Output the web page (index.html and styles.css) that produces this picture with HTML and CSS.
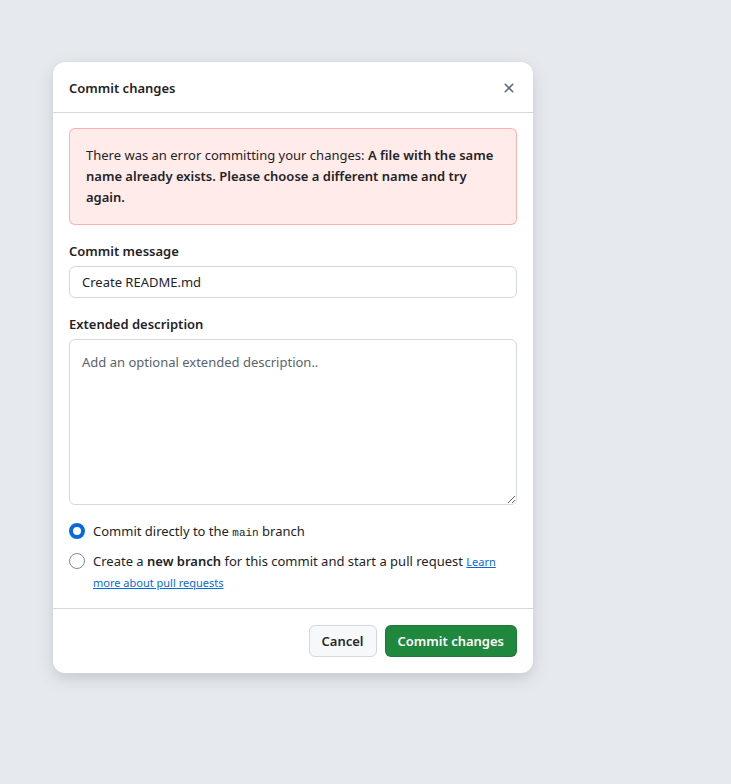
FILE: index.html
```html
<!DOCTYPE html>
<html lang="en">
<head>
<meta charset="utf-8">
<title>Commit changes</title>
<link rel="stylesheet" href="styles.css">
</head>
<body>
<div class="dialog" role="dialog" aria-labelledby="dlg-title">
  <div class="dialog-header">
    <h2 id="dlg-title" class="dialog-title">Commit changes</h2>
    <button class="close-btn" aria-label="Close">
      <svg width="16" height="16" viewBox="0 0 16 16" fill="currentColor"><path d="M3.72 3.72a.75.75 0 0 1 1.06 0L8 6.94l3.22-3.22a.749.749 0 0 1 1.275.326.749.749 0 0 1-.215.734L9.06 8l3.22 3.22a.749.749 0 0 1-.326 1.275.749.749 0 0 1-.734-.215L8 9.06l-3.22 3.22a.751.751 0 0 1-1.042-.018.751.751 0 0 1-.018-1.042L6.940 8 3.72 4.78a.75.75 0 0 1 0-1.060Z"/></svg>
    </button>
  </div>
  <div class="dialog-body">
    <div class="flash-error">There was an error committing your changes: <strong>A file with the same name already exists. Please choose a different name and try again.</strong></div>
    <div class="field">
      <label class="field-label" for="msg">Commit message</label>
      <input id="msg" class="text-input" type="text" value="Create README.md">
    </div>
    <div class="field">
      <label class="field-label" for="desc">Extended description</label>
      <textarea id="desc" class="text-area" placeholder="Add an optional extended description.."></textarea>
    </div>
    <div class="radio-group">
      <label class="radio-row">
        <span class="radio checked"></span>
        <span class="radio-text">Commit directly to the <code>main</code> branch</span>
      </label>
      <label class="radio-row">
        <span class="radio"></span>
        <span class="radio-text">Create a <strong>new branch</strong> for this commit and start a pull request <a class="small-link" href="#">Learn more about pull requests</a></span>
      </label>
    </div>
  </div>
  <div class="dialog-footer">
    <button class="btn btn-default">Cancel</button>
    <button class="btn btn-primary">Commit changes</button>
  </div>
</div>
</body>
</html>
```
FILE: styles.css
```css
* { box-sizing: border-box; }

html, body {
  margin: 0;
  height: 100%;
}

body {
  background: #e6eaef;
  font-family: "Noto Sans", "Open Sans", sans-serif;
  font-size: 13px;
  line-height: 21px;
  color: #1f2328;
  padding: 62px 0 0 53px;
}

.dialog {
  width: 480px;
  background: #ffffff;
  border-radius: 12px;
  box-shadow: 0 0 0 1px rgba(209, 217, 224, 0.45), 0 6px 12px -3px rgba(37, 41, 46, 0.06), 0 6px 18px 0 rgba(37, 41, 46, 0.12);
}

.dialog-header {
  display: flex;
  align-items: center;
  justify-content: space-between;
  height: 51px;
  padding: 0 12px 0 16px;
  border-bottom: 1px solid #d1d9e0;
}

.dialog-title {
  margin: 0;
  font-size: 13px;
  font-weight: 600;
  line-height: 21px;
  padding-top: 2px;
}

.close-btn {
  display: flex;
  align-items: center;
  justify-content: center;
  width: 24px;
  height: 24px;
  padding: 0;
  border: 0;
  background: transparent;
  color: #59636e;
  margin-top: 1px;
}

.dialog-body {
  padding: 15px 16px 15px;
  border-bottom: 1px solid #d1d9e0;
}

.flash-error {
  background: #ffebe9;
  border: 1px solid rgba(255, 129, 130, 0.55);
  border-radius: 6px;
  padding: 16px;
  line-height: 21px;
}

.flash-error strong { font-weight: 600; }

.field {
  margin-top: 16px;
  display: flex;
  flex-direction: column;
}

.field-label {
  font-weight: 600;
  line-height: 21px;
  margin-bottom: 4px;
}

.text-input,
.text-area {
  font-family: inherit;
  font-size: 13px;
  color: #1f2328;
  border: 1px solid #d1d9e0;
  border-radius: 6px;
  background: #ffffff;
  padding: 0 12px;
  outline: none;
  margin: 0;
}

.text-input {
  height: 32px;
  line-height: 20px;
}

.text-area {
  display: block;
  height: 166px;
  padding: 12px 12px;
  line-height: 20px;
  resize: vertical;
}

.text-area::placeholder { color: #59636e; }

.radio-group {
  margin-top: 16px;
  display: flex;
  flex-direction: column;
  gap: 9px;
}

.radio-row {
  display: flex;
  align-items: flex-start;
  gap: 8px;
}

.radio {
  flex: none;
  width: 16px;
  height: 16px;
  margin-top: 2px;
  border-radius: 50%;
  border: 1px solid #818b98;
  background: #ffffff;
}

.radio.checked {
  border: 4px solid #0969da;
}

.radio-text {
  line-height: 21px;
}

.radio-text strong { font-weight: 600; }

.radio-text code {
  font-family: "Liberation Mono", "DejaVu Sans Mono", monospace;
  font-size: 11px;
  line-height: 1;
}

.small-link {
  font-size: 11px;
  line-height: 1;
  color: #0969da;
  text-decoration: underline;
}

.dialog-footer {
  display: flex;
  justify-content: flex-end;
  gap: 8px;
  padding: 16px;
}

.btn {
  height: 32px;
  padding: 0 12px;
  font-family: inherit;
  font-size: 13px;
  font-weight: 600;
  line-height: 20px;
  border-radius: 6px;
}

.btn-default {
  background: #f6f8fa;
  border: 1px solid #d1d9e0;
  color: #25292e;
}

.btn-primary {
  background: #1f883d;
  border: 1px solid rgba(31, 35, 40, 0.15);
  color: #ffffff;
}
```
